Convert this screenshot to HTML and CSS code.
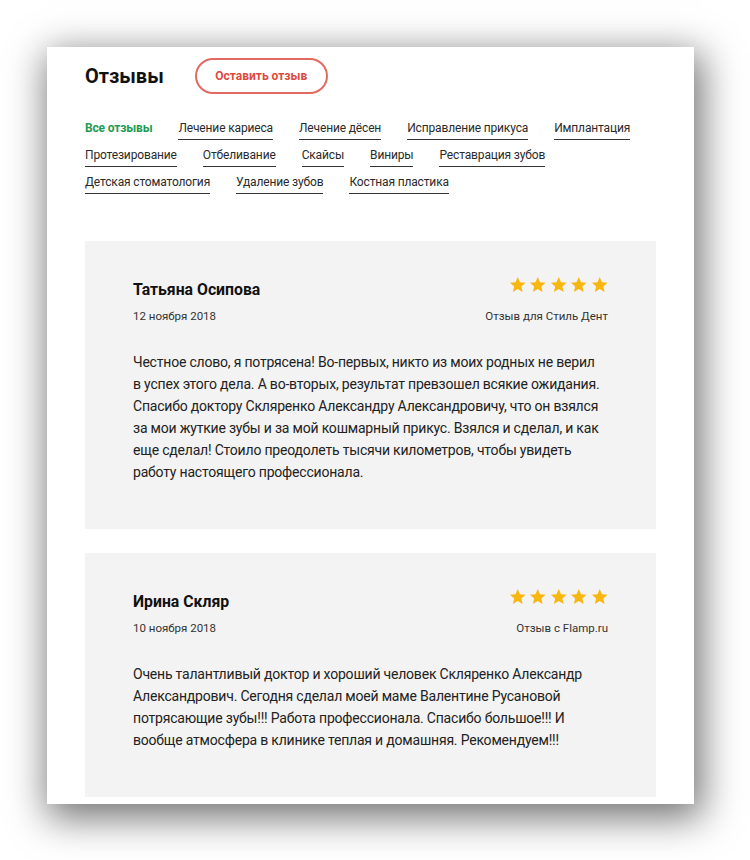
FILE: index.html
```html
<!DOCTYPE html>
<html lang="ru">
<head>
<meta charset="utf-8">
<title>Отзывы</title>
<link rel="stylesheet" href="styles.css">
</head>
<body>
<div class="sheet">
  <div class="head">
    <h1 class="title">Отзывы</h1>
    <a class="btn" href="#">Оставить отзыв</a>
  </div>
  <ul class="filters">
    <li class="filter active">Все отзывы</li>
    <li class="filter">Лечение кариеса</li>
    <li class="filter">Лечение дёсен</li>
    <li class="filter">Исправление прикуса</li>
    <li class="filter">Имплантация</li>
    <li class="filter">Протезирование</li>
    <li class="filter">Отбеливание</li>
    <li class="filter">Скайсы</li>
    <li class="filter">Виниры</li>
    <li class="filter">Реставрация зубов</li>
    <li class="filter">Детская стоматология</li>
    <li class="filter">Удаление зубов</li>
    <li class="filter">Костная пластика</li>
  </ul>

  <div class="review">
    <div class="review-head">
      <div class="who">
        <div class="name">Татьяна Осипова</div>
        <div class="date">12 ноября 2018</div>
      </div>
      <div class="meta">
        <div class="stars">
          <svg viewBox="0 0 24 24"><path d="M12 1.5l3.1 7.1 7.6.7-5.8 5 1.8 7.5L12 17.8l-6.7 4 1.8-7.5-5.8-5 7.6-.7z"/></svg>
          <svg viewBox="0 0 24 24"><path d="M12 1.5l3.1 7.1 7.6.7-5.8 5 1.8 7.5L12 17.8l-6.7 4 1.8-7.5-5.8-5 7.6-.7z"/></svg>
          <svg viewBox="0 0 24 24"><path d="M12 1.5l3.1 7.1 7.6.7-5.8 5 1.8 7.5L12 17.8l-6.7 4 1.8-7.5-5.8-5 7.6-.7z"/></svg>
          <svg viewBox="0 0 24 24"><path d="M12 1.5l3.1 7.1 7.6.7-5.8 5 1.8 7.5L12 17.8l-6.7 4 1.8-7.5-5.8-5 7.6-.7z"/></svg>
          <svg viewBox="0 0 24 24"><path d="M12 1.5l3.1 7.1 7.6.7-5.8 5 1.8 7.5L12 17.8l-6.7 4 1.8-7.5-5.8-5 7.6-.7z"/></svg>
        </div>
        <div class="source">Отзыв для Стиль Дент</div>
      </div>
    </div>
    <p class="text">Честное слово, я потрясена! Во-первых, никто из моих родных не верил<br>в&nbsp;успех этого дела. А во-вторых, результат превзошел всякие ожидания.<br>Спасибо доктору Скляренко Александру Александровичу, что он взялся<br>за мои жуткие зубы и за мой кошмарный прикус. Взялся и сделал, и&nbsp;как<br>еще сделал! Стоило преодолеть тысячи километров, чтобы увидеть<br>работу настоящего профессионала.</p>
  </div>

  <div class="review">
    <div class="review-head">
      <div class="who">
        <div class="name">Ирина Скляр</div>
        <div class="date">10 ноября 2018</div>
      </div>
      <div class="meta">
        <div class="stars">
          <svg viewBox="0 0 24 24"><path d="M12 1.5l3.1 7.1 7.6.7-5.8 5 1.8 7.5L12 17.8l-6.7 4 1.8-7.5-5.8-5 7.6-.7z"/></svg>
          <svg viewBox="0 0 24 24"><path d="M12 1.5l3.1 7.1 7.6.7-5.8 5 1.8 7.5L12 17.8l-6.7 4 1.8-7.5-5.8-5 7.6-.7z"/></svg>
          <svg viewBox="0 0 24 24"><path d="M12 1.5l3.1 7.1 7.6.7-5.8 5 1.8 7.5L12 17.8l-6.7 4 1.8-7.5-5.8-5 7.6-.7z"/></svg>
          <svg viewBox="0 0 24 24"><path d="M12 1.5l3.1 7.1 7.6.7-5.8 5 1.8 7.5L12 17.8l-6.7 4 1.8-7.5-5.8-5 7.6-.7z"/></svg>
          <svg viewBox="0 0 24 24"><path d="M12 1.5l3.1 7.1 7.6.7-5.8 5 1.8 7.5L12 17.8l-6.7 4 1.8-7.5-5.8-5 7.6-.7z"/></svg>
        </div>
        <div class="source">Отзыв с Flamp.ru</div>
      </div>
    </div>
    <p class="text">Очень талантливый доктор и хороший человек Скляренко Александр<br>Александрович. Сегодня сделал моей маме Валентине Русановой<br>потрясающие зубы!!! Работа профессионала. Спасибо большое!!! И<br>вообще атмосфера в клинике теплая и домашняя. Рекомендуем!!!</p>
  </div>
</div>
</body>
</html>
```

FILE: styles.css
```css
html, body {
  margin: 0;
  padding: 0;
  background: #ffffff;
}

body {
  font-family: Roboto, "Noto Sans", sans-serif;
  color: #222;
  overflow: hidden;
  height: 860px;
}

.sheet {
  box-sizing: border-box;
  width: 647px;
  height: 757px;
  margin: 47px 0 0 47px;
  padding: 11px 38px 6px;
  background: #fff;
  box-shadow: 4px 10px 36px 4px rgba(0, 0, 0, 0.55);
  overflow: hidden;
}

.head {
  display: flex;
  align-items: center;
  gap: 31px;
}

.title {
  margin: 0;
  font-size: 20px;
  font-weight: 700;
  color: #111;
  line-height: 24px;
}

.btn {
  box-sizing: border-box;
  display: flex;
  align-items: center;
  justify-content: center;
  width: 133px;
  height: 36px;
  border: 2px solid #e36a61;
  border-radius: 18px;
  color: #dd4a40;
  font-size: 12px;
  font-weight: 700;
  text-decoration: none;
}

.filters {
  list-style: none;
  margin: 26px 0 0;
  padding: 0;
  display: flex;
  flex-wrap: wrap;
  column-gap: 26px;
  row-gap: 7px;
}

.filter {
  font-size: 12px;
  line-height: 17px;
  letter-spacing: -0.15px;
  padding-bottom: 2px;
  border-bottom: 1px solid #333;
  color: #2a2a2a;
}

.filter.active {
  border-bottom-color: transparent;
  color: #1f9a52;
  font-weight: 700;
}

.review {
  background: #f3f3f3;
  margin-top: 47px;
  padding: 35px 48px 46px;
}

.review + .review {
  margin-top: 24px;
}

.review-head {
  display: flex;
  justify-content: space-between;
}

.who {
  padding-top: 4px;
}

.name {
  font-size: 15.8px;
  line-height: 20px;
  font-weight: 700;
  color: #111;
}

.date,
.source {
  font-size: 11.5px;
  line-height: 16px;
  color: #333;
  margin-top: 8px;
}

.meta {
  display: flex;
  flex-direction: column;
  align-items: flex-end;
}

.stars {
  display: flex;
  gap: 3px;
  height: 17px;
}

.stars svg {
  width: 17.5px;
  height: 17.5px;
  fill: #f8b710;
}

.source {
  margin-top: 15px;
}

.text {
  margin: 27px 0 0;
  font-size: 14px;
  letter-spacing: -0.2px;
  line-height: 22px;
  white-space: nowrap;
  color: #222;
}
```
